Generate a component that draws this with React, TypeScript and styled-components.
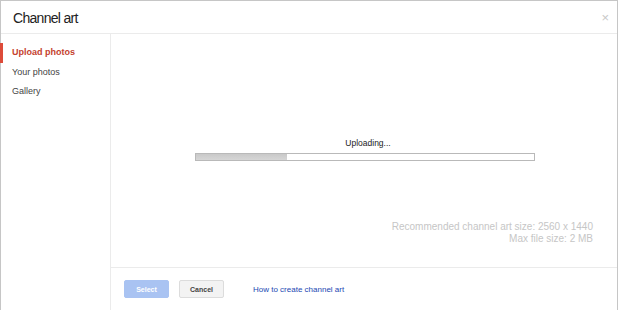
import styled, { createGlobalStyle } from "styled-components";

const Global = createGlobalStyle`
  html, body {
    margin: 0;
    padding: 0;
    background: #fff;
  }
  body {
    font-family: Arial, "Liberation Sans", sans-serif;
  }
`;

const Dialog = styled.div`
  width: 618px;
  height: 310px;
  box-sizing: border-box;
  border: 1px solid #c6c6c6;
  border-bottom: none;
  display: flex;
  flex-direction: column;
  background: #fff;
`;

const Header = styled.div`
  height: 32px;
  border-bottom: 1px solid #ebebeb;
  display: flex;
  align-items: center;
  justify-content: space-between;
  padding: 0 8px 0 12px;
  flex-shrink: 0;
`;

const Title = styled.h1`
  margin: 0;
  font-size: 14px;
  letter-spacing: -0.7px;
  font-weight: normal;
  color: #222;
  padding-top: 2px;
`;

const Close = styled.span`
  font-size: 13px;
  color: #c8c8c8;
  line-height: 1;
`;

const Body = styled.div`
  flex: 1;
  display: flex;
  min-height: 0;
`;

const Sidebar = styled.nav`
  width: 109px;
  border-right: 1px solid #ebebeb;
  padding-top: 9px;
  flex-shrink: 0;
`;

const NavItem = styled.div<{ $active?: boolean }>`
  height: 19.5px;
  line-height: 19px;
  font-size: 9px;
  padding-left: 9px;
  color: ${(p) => (p.$active ? "#c4412e" : "#444")};
  font-weight: ${(p) => (p.$active ? "bold" : "normal")};
  border-left: 3px solid ${(p) => (p.$active ? "#dd4b39" : "transparent")};
  margin-left: -1px;
`;

const Main = styled.div`
  flex: 1;
  display: flex;
  flex-direction: column;
`;

const Content = styled.div`
  flex: 1;
  display: flex;
  flex-direction: column;
  align-items: center;
  padding-top: 104px;
`;

const Status = styled.div`
  font-size: 8.5px;
  color: #222;
  margin-bottom: 5px;
  margin-left: 8px;
`;

const Track = styled.div`
  width: 338px;
  height: 6px;
  border: 1px solid #b9b9b9;
  background: #fff;
  margin-left: 2px;
`;

const Fill = styled.div`
  height: 100%;
  background: linear-gradient(#c9c9c9, #d6d6d6);
`;

const Hint = styled.div`
  align-self: flex-end;
  margin-top: 60px;
  margin-right: 24px;
  text-align: right;
  font-size: 10px;
  line-height: 12px;
  color: #c6c6c6;
`;

const Footer = styled.div`
  height: 42px;
  border-top: 1px solid #ebebeb;
  display: flex;
  align-items: center;
  padding: 0 0 0 13px;
  gap: 10px;
  flex-shrink: 0;
`;

const Button = styled.button<{ $primary?: boolean }>`
  width: 45px;
  height: 18px;
  box-sizing: border-box;
  padding: 0;
  font-family: inherit;
  font-size: 7px;
  font-weight: bold;
  border-radius: 2px;
  border: 1px solid ${(p) => (p.$primary ? "#a9c3f2" : "#dcdcdc")};
  background: ${(p) => (p.$primary ? "#a9c3f2" : "#f3f3f3")};
  color: ${(p) => (p.$primary ? "#fff" : "#444")};
`;

const Link = styled.a`
  font-size: 8px;
  color: #1b48b3;
  text-decoration: none;
  margin-left: 19px;
`;

function App() {
  const progress = 27;
  return (
    <>
      <Global />
      <Dialog>
        <Header>
          <Title>Channel art</Title>
          <Close>×</Close>
        </Header>
        <Body>
          <Sidebar>
            <NavItem $active>Upload photos</NavItem>
            <NavItem>Your photos</NavItem>
            <NavItem>Gallery</NavItem>
          </Sidebar>
          <Main>
            <Content>
              <Status>Uploading...</Status>
              <Track>
                <Fill style={{ width: `${progress}%` }} />
              </Track>
              <Hint>
                Recommended channel art size: 2560 x 1440
                <br />
                Max file size: 2 MB
              </Hint>
            </Content>
            <Footer>
              <Button $primary>Select</Button>
              <Button>Cancel</Button>
              <Link href="#">How to create channel art</Link>
            </Footer>
          </Main>
        </Body>
      </Dialog>
    </>
  );
}

export default App;
